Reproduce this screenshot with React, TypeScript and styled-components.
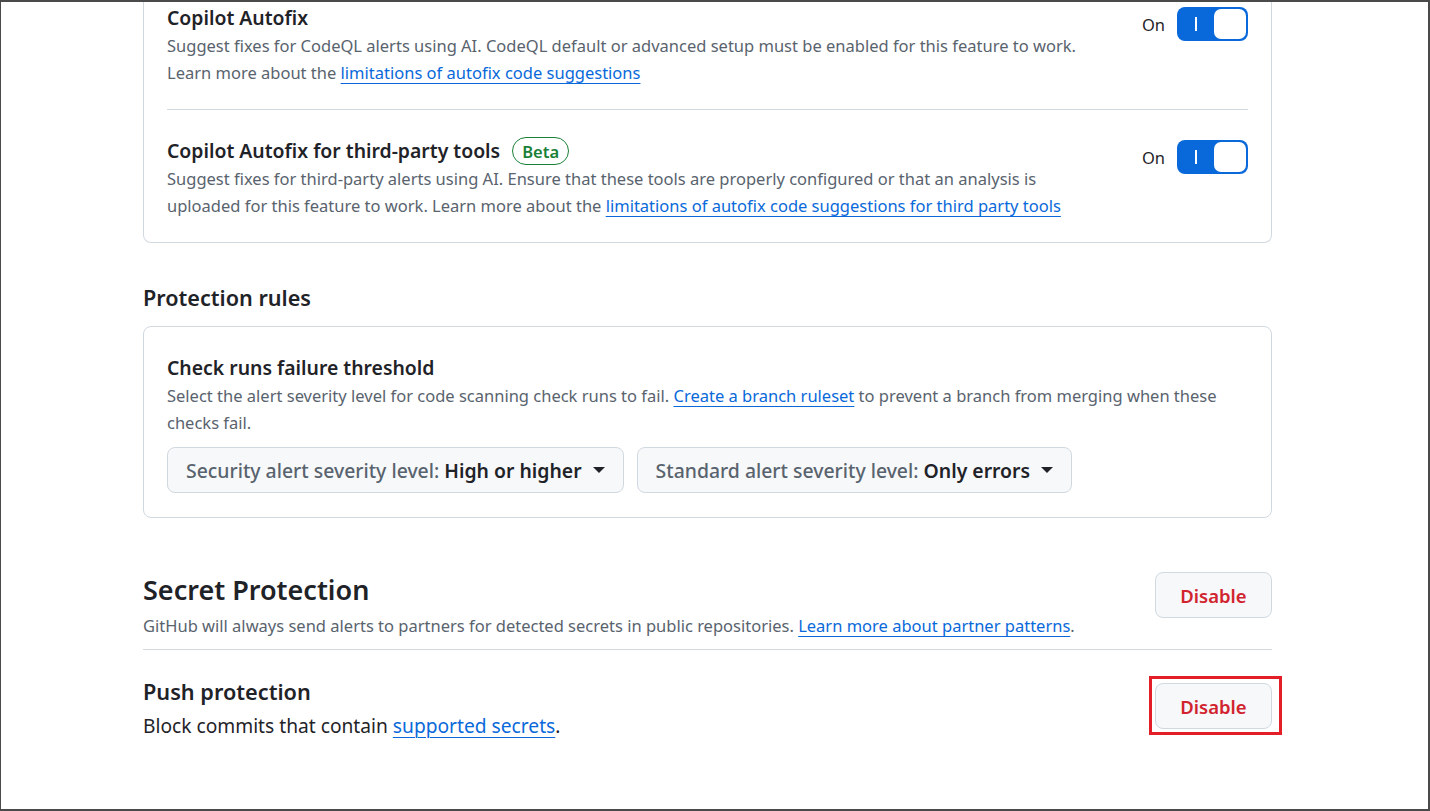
import React from 'react'
import styled, { createGlobalStyle } from 'styled-components'

const GlobalStyle = createGlobalStyle`
  html, body {
    margin: 0;
    padding: 0;
    background: #ffffff;
  }
  body {
    font-family: "Noto Sans", "Liberation Sans", sans-serif;
    color: #1f2328;
  }
  * {
    box-sizing: border-box;
  }
`

const Frame = styled.div`
  width: 1430px;
  height: 811px;
  overflow: hidden;
  border: 2px solid #4a4a4a;
  border-left-width: 1px;
  background: #ffffff;
`

const Column = styled.div`
  width: 1129px;
  margin-left: 142px;
`

const Card = styled.div<{ clipped?: boolean }>`
  border: 1px solid #d1d9e0;
  border-radius: 8px;
  ${(p) => p.clipped && `
    border-top: none;
    border-top-left-radius: 0;
    border-top-right-radius: 0;
  `}
`

const SettingRow = styled.div<{ first?: boolean }>`
  display: flex;
  align-items: flex-start;
  gap: 24px;
  margin: 0 23px;
  padding: ${(p) => (p.first ? '2px' : '27px')} 0 23px;
  & + & {
    border-top: 1px solid #d1d9e0;
  }
`

const Info = styled.div`
  flex: 1;
  min-width: 0;
`

const TitleLine = styled.div`
  display: flex;
  align-items: center;
  gap: 12px;
  height: 28px;
`

const Title = styled.span`
  font-size: 19.4px;
  font-weight: 600;
  line-height: 28px;
  color: #1f2328;
`

const Desc = styled.p<{ gapTop?: number }>`
  margin: ${(p) => p.gapTop ?? 0}px 0 0;
  font-size: 16.5px;
  line-height: 27px;
  color: #59636e;
`

const Link = styled.a`
  color: #0969da;
  text-decoration: underline;
  text-underline-offset: 4px;
  text-decoration-thickness: 1px;
`

const Badge = styled.span`
  display: inline-flex;
  align-items: center;
  height: 28px;
  padding: 0 9px;
  border: 1.5px solid #1a7f37;
  border-radius: 999px;
  color: #1a7f37;
  font-size: 16.5px;
  font-weight: 600;
`

const ToggleArea = styled.div`
  display: flex;
  align-items: center;
  gap: 12px;
  margin-top: 3px;
`

const ToggleLabel = styled.span`
  font-size: 16.5px;
  color: #1f2328;
`

const Toggle = styled.div`
  position: relative;
  display: flex;
  align-items: center;
  justify-content: flex-end;
  width: 71px;
  height: 34px;
  padding: 2px;
  background: #0969da;
  border-radius: 8px;
`

const ToggleBar = styled.span`
  position: absolute;
  left: 18px;
  top: 10px;
  width: 2px;
  height: 14px;
  background: #ffffff;
`

const Knob = styled.span`
  width: 32px;
  height: 30px;
  background: #ffffff;
  border-radius: 7px;
`

const SectionHeading = styled.h2`
  margin: 40px 0 13px;
  font-size: 21.6px;
  font-weight: 600;
  line-height: 30px;
  color: #1f2328;
`

const RuleBody = styled.div`
  padding: 27px 23px 24px;
`

const DropdownRow = styled.div`
  display: flex;
  gap: 13px;
  margin-top: 11px;
`

const Dropdown = styled.button`
  display: flex;
  align-items: center;
  gap: 11px;
  height: 46px;
  padding: 0 18px;
  background: #f6f8fa;
  border: 1px solid #d1d9e0;
  border-radius: 8px;
  font-family: inherit;
  font-size: 19.4px;
  font-weight: 500;
  color: #59636e;
`

const DropValue = styled.span`
  color: #1f2328;
  font-weight: 600;
`

const Caret = styled.span`
  width: 0;
  height: 0;
  border-left: 6px solid transparent;
  border-right: 6px solid transparent;
  border-top: 6px solid #1f2328;
`

const FeatureRow = styled.div<{ top: number; bottom: number; divided?: boolean }>`
  display: flex;
  align-items: flex-start;
  justify-content: space-between;
  gap: 24px;
  padding-top: ${(p) => p.top}px;
  padding-bottom: ${(p) => p.bottom}px;
  ${(p) => p.divided && 'border-bottom: 1px solid #d1d9e0;'}
`

const BigHeading = styled.h2`
  margin: 0;
  font-size: 27px;
  font-weight: 600;
  line-height: 40px;
  color: #1f2328;
`

const SubTitle = styled.div`
  font-size: 21.7px;
  font-weight: 600;
  line-height: 28px;
  color: #1f2328;
`

const PlainDesc = styled.p`
  margin: 5px 0 0;
  font-size: 19.2px;
  line-height: 30px;
  color: #1f2328;
`

const DangerButton = styled.button<{ highlighted?: boolean }>`
  position: relative;
  flex-shrink: 0;
  width: 117px;
  height: 46px;
  margin-top: ${(p) => (p.highlighted ? '5px' : '2px')};
  background: #f6f8fa;
  border: 1px solid #d1d9e0;
  border-radius: 8px;
  font-family: inherit;
  font-size: 18.5px;
  font-weight: 600;
  color: #d1242f;
  ${(p) => p.highlighted && `
    &::after {
      content: '';
      position: absolute;
      top: -8px;
      left: -7px;
      right: -11px;
      bottom: -7px;
      border: 3px solid #e41e26;
    }
  `}
`

const Setting: React.FC<{
  first?: boolean
  title: string
  beta?: boolean
  children: React.ReactNode
}> = ({ first, title, beta, children }) => (
  <SettingRow first={first}>
    <Info>
      <TitleLine>
        <Title>{title}</Title>
        {beta && <Badge>Beta</Badge>}
      </TitleLine>
      <Desc>{children}</Desc>
    </Info>
    <ToggleArea>
      <ToggleLabel>On</ToggleLabel>
      <Toggle>
        <ToggleBar />
        <Knob />
      </Toggle>
    </ToggleArea>
  </SettingRow>
)

export default function App() {
  return (
    <>
      <GlobalStyle />
      <Frame>
        <Column>
          <Card clipped>
            <Setting first title="Copilot Autofix">
              Suggest fixes for CodeQL alerts using AI. CodeQL default or advanced setup must be enabled for this feature to work.
              <br />
              Learn more about the <Link href="#">limitations of autofix code suggestions</Link>
            </Setting>
            <Setting title="Copilot Autofix for third-party tools" beta>
              Suggest fixes for third-party alerts using AI. Ensure that these tools are properly configured or that an analysis is
              <br />
              uploaded for this feature to work. Learn more about the{' '}
              <Link href="#">limitations of autofix code suggestions for third party tools</Link>
            </Setting>
          </Card>

          <SectionHeading>Protection rules</SectionHeading>
          <Card>
            <RuleBody>
              <TitleLine>
                <Title>Check runs failure threshold</Title>
              </TitleLine>
              <Desc>
                Select the alert severity level for code scanning check runs to fail.{' '}
                <Link href="#">Create a branch ruleset</Link> to prevent a branch from merging when these
                <br />
                checks fail.
              </Desc>
              <DropdownRow>
                <Dropdown>
                  <span>
                    Security alert severity level: <DropValue>High or higher</DropValue>
                  </span>
                  <Caret />
                </Dropdown>
                <Dropdown>
                  <span>
                    Standard alert severity level: <DropValue>Only errors</DropValue>
                  </span>
                  <Caret />
                </Dropdown>
              </DropdownRow>
            </RuleBody>
          </Card>

          <FeatureRow top={52} bottom={10} divided>
            <div>
              <BigHeading>Secret Protection</BigHeading>
              <Desc gapTop={2}>
                GitHub will always send alerts to partners for detected secrets in public repositories.{' '}
                <Link href="#">Learn more about partner patterns</Link>.
              </Desc>
            </div>
            <DangerButton>Disable</DangerButton>
          </FeatureRow>

          <FeatureRow top={28} bottom={0}>
            <div>
              <SubTitle>Push protection</SubTitle>
              <PlainDesc>
                Block commits that contain <Link href="#">supported secrets</Link>.
              </PlainDesc>
            </div>
            <DangerButton highlighted>Disable</DangerButton>
          </FeatureRow>
        </Column>
      </Frame>
    </>
  )
}
